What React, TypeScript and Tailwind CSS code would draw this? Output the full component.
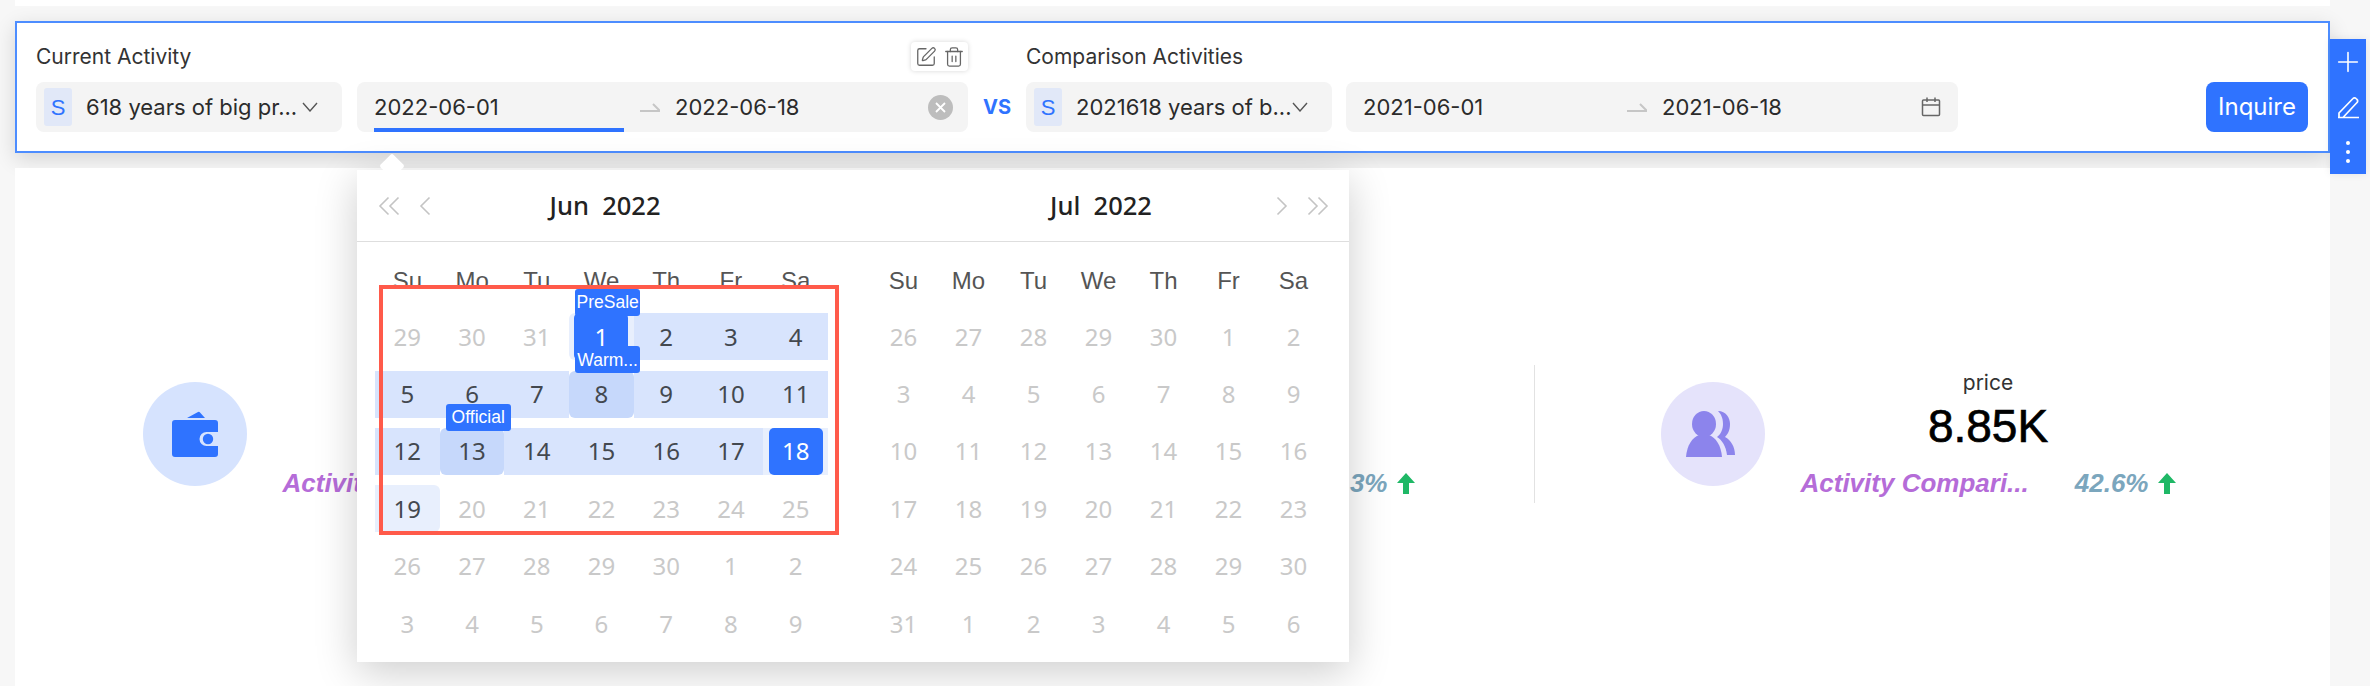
import { Plus, SquarePen, Trash2 } from "lucide-react";

const sans = "font-['Inter','Liberation_Sans',sans-serif]";
const helv = "font-['Liberation_Sans',Arial,sans-serif]";
const noto = "font-['Noto_Sans',sans-serif]";

const WEEK = ["Su", "Mo", "Tu", "We", "Th", "Fr", "Sa"];

type Day = { n: number; off?: boolean; badge?: string };

const JUN: Day[] = [
  ...[29, 30, 31].map((n) => ({ n, off: true })),
  ...Array.from({ length: 19 }, (_, i) => ({
    n: i + 1,
    badge: i === 0 ? "PreSale" : i === 7 ? "Warm..." : i === 12 ? "Official" : undefined,
  })),
  ...[20, 21, 22, 23, 24, 25, 26, 27, 28, 29, 30].map((n) => ({ n, off: true })),
  ...[1, 2, 3, 4, 5, 6, 7, 8, 9].map((n) => ({ n, off: true })),
];

const JUL: Day[] = [
  ...[26, 27, 28, 29, 30].map((n) => ({ n, off: true })),
  ...Array.from({ length: 31 }, (_, i) => ({ n: i + 1, off: true })),
  ...[1, 2, 3, 4, 5, 6].map((n) => ({ n, off: true })),
];

function Chevron({ dir, double }: { dir: "left" | "right"; double?: boolean }) {
  const flip = dir === "right";
  return (
    <svg width={double ? 22 : 12} height="20" viewBox={double ? "0 0 22 20" : "0 0 12 20"} fill="none" stroke="#c4c4c4" strokeWidth="1.6" className={flip ? "-scale-x-100" : ""}>
      <path d="M10.5 1.5 2 10l8.5 8.5" />
      {double && <path d="M20.5 1.5 12 10l8.5 8.5" />}
    </svg>
  );
}

function HalfArrow() {
  return (
    <svg width="20" height="12" viewBox="0 0 20 12" fill="none" stroke="#c6c6c6" strokeWidth="2">
      <path d="M0 10h20L13 3" />
    </svg>
  );
}

function ActivitySelect({ name }: { name: string }) {
  return (
    <div className="flex h-[50px] w-[306px] items-center rounded-lg bg-[#f4f4f4] pl-2 pr-6">
      <span className={`flex h-[38px] w-[28px] shrink-0 items-center justify-center rounded-[3px] bg-[#e1e8f8] text-[22px] text-[#2f73ff] ${helv}`}>S</span>
      <span className="ml-[14px] whitespace-nowrap text-[22px] text-[#2b2b2b]">{name}</span>
      <svg width="16" height="10" viewBox="0 0 16 10" fill="none" stroke="#555" strokeWidth="1.4" className="ml-auto shrink-0">
        <path d="M1 1l7 8 7-8" />
      </svg>
    </div>
  );
}

function DateText({ children, width }: { children: string; width: string }) {
  return <span className={`text-[22px] text-[#2b2b2b] ${width}`}>{children}</span>;
}

function CalendarIcon() {
  return (
    <svg width="20" height="20" viewBox="0 0 20 20" fill="none" stroke="#666" strokeWidth="1.5">
      <rect x="1.5" y="3" width="17" height="15.5" rx="1" />
      <path d="M1.5 8h17M6 .5v4.5M14 .5v4.5" />
    </svg>
  );
}

function DayCell({ day, monthActive }: { day: Day; monthActive: boolean }) {
  const inRange = monthActive && !day.off;
  const isStart = inRange && day.n === 1;
  const isEnd = inRange && day.n === 18;
  const isTail = inRange && day.n === 19;
  const isMark = inRange && (day.n === 8 || day.n === 13);
  const band = !inRange
    ? ""
    : isStart
      ? "bg-[#e8effd] rounded-l-md"
      : isEnd
        ? "bg-[#e8effd]"
        : isTail
          ? "bg-[#e8effd] rounded-r-md"
          : isMark
            ? "bg-[#c6d8fb] rounded-md"
            : "bg-[#d8e4fd]";

  return (
    <div className="relative flex h-[57.4px] items-center">
      <div className={`flex h-[47px] w-full items-center justify-center ${band}`}>
        <span
          className={`flex h-[47px] w-[54px] items-center justify-center rounded-[5px] text-[24px] ${
            isStart || isEnd ? "bg-[#2f73ff] text-white" : inRange ? "text-[#43484f]" : "text-[#c9c9c9]"
          } ${noto}`}
        >
          {day.n}
        </span>
      </div>
      {inRange && day.badge && (
        <span className={`absolute left-[6px] top-[-19px] z-10 flex h-[27px] w-[65px] items-center justify-center rounded-[3px] bg-[#2f73ff] text-[17.5px] text-white ${helv}`}>
          {day.badge}
        </span>
      )}
    </div>
  );
}

function MonthGrid({ days, active, gridWidth }: { days: Day[]; active?: boolean; gridWidth: string }) {
  return (
    <div className="w-[496px] pl-[18px] pt-6 pb-[10px]">
      <div className={`mb-3 grid grid-cols-7 text-center text-[24px] leading-[30px] text-[#555] ${gridWidth} ${helv}`}>
        {WEEK.map((w) => (
          <span key={w}>{w}</span>
        ))}
      </div>
      <div className={`grid grid-cols-7 ${gridWidth}`}>
        {days.map((d, i) => (
          <DayCell key={i} day={d} monthActive={!!active} />
        ))}
      </div>
    </div>
  );
}

function RangePopup() {
  return (
    <div className="absolute left-[357px] top-[170px] z-20 w-[992px] bg-white shadow-[0_10px_40px_rgba(0,0,0,0.2)]">
      <div className="absolute left-[26px] top-[-13px] h-[18px] w-[18px] rotate-45 rounded-[2px] bg-white" />
      <div className={`relative flex h-[72px] border-b border-[#dedede] text-[25.5px] font-medium text-[#222] ${noto}`}>
        <div className="grid w-[496px] grid-cols-[1fr_auto_1fr] items-center px-[21px]">
          <div className="flex items-center gap-[19px]">
            <Chevron dir="left" double />
            <Chevron dir="left" />
          </div>
          <span className="whitespace-pre">Jun  2022</span>
          <span />
        </div>
        <div className="grid w-[496px] grid-cols-[1fr_auto_1fr] items-center px-5">
          <span />
          <span className="whitespace-pre">Jul  2022</span>
          <div className="flex items-center justify-end gap-[19px]">
            <Chevron dir="right" />
            <Chevron dir="right" double />
          </div>
        </div>
      </div>
      <div className="flex">
        <MonthGrid days={JUN} active gridWidth="w-[453px]" />
        <MonthGrid days={JUL} gridWidth="w-[455px]" />
      </div>
      {/* annotation box from the screenshot */}
      <div className="absolute left-[22px] top-[115px] z-30 h-[250px] w-[460px] border-4 border-[#ff5a4a]" />
    </div>
  );
}

function Wallet() {
  return (
    <svg width="46" height="46" viewBox="0 0 46 46" fill="#2f73ff">
      <path d="M15 7 26 1a1.5 1.5 0 0 1 2 .5L33 7Z" />
      <path d="M3 9H43a3 3 0 0 1 3 3v9H34.5a7 7 0 0 0 0 14H46v8a3 3 0 0 1-3 3H3a3 3 0 0 1-3-3V12a3 3 0 0 1 3-3Z" />
      <circle cx="36" cy="28" r="5.2" />
    </svg>
  );
}

function People() {
  return (
    <svg width="50" height="46" viewBox="0 0 50 46" fill="#8c84ec" className="ml-[-4px]">
      <path d="M32 0C40 0 44 7 44 13C44 19 42 23 39 26C45 29 49 36 49 44H41C40 35 36 29 31 26C35 23 37 18 37 13C37 7 35 3 32 0Z" />
      <ellipse cx="18" cy="13" rx="12" ry="13" />
      <path d="M0 46C1 34 6 27 13 24H23C30 27 35 34 36 46Z" />
    </svg>
  );
}

function UpArrow() {
  return (
    <svg width="18" height="21" viewBox="0 0 18 21" fill="#1fb866">
      <path d="M9 0 18 10H12V21H6V10H0Z" />
    </svg>
  );
}

function Stat({
  icon,
  tint,
  label,
  value,
  percent,
  divider,
}: {
  icon: React.ReactNode;
  tint: string;
  label: string;
  value: string;
  percent: string;
  divider?: boolean;
}) {
  return (
    <div className={`flex h-[138px] items-center justify-center gap-9 ${divider ? "border-r border-[#e2e2e2]" : ""}`}>
      <div className={`flex h-[104px] w-[104px] items-center justify-center rounded-full ${tint}`}>{icon}</div>
      <div className="w-[375px] text-center">
        <div className="text-[21px] leading-6 text-[#333]">{label}</div>
        <div className={`mt-[6px] text-[46px] leading-[50px] text-black [-webkit-text-stroke:0.7px_black] ${helv}`}>{value}</div>
        <div className={`mt-[18px] flex items-center justify-between text-[26px] font-bold italic leading-7 ${helv}`}>
          <span className="whitespace-nowrap text-[#b56cd8]">Activity Compari...</span>
          <span className="flex items-center gap-[9px] text-[#7ba6bd]">
            {percent}
            <UpArrow />
          </span>
        </div>
      </div>
    </div>
  );
}

function SideToolbar() {
  return (
    <div className="absolute left-[2330px] top-[39px] z-10 flex h-[135px] w-9 flex-col items-center bg-[#2f73ff] pt-[7px] text-white shadow-[0_0_8px_rgba(0,0,0,0.08)]">
      <Plus size={32} strokeWidth={1.2} />
      <svg width="24" height="24" viewBox="0 0 24 24" fill="none" stroke="white" strokeWidth="1.7" className="mt-[17px]">
        <path d="M2 22.5h21M3 22.5v-4.5L17 3.5a2 2 0 0 1 3 0l1 1a2 2 0 0 1 0 3L7 22.5" />
      </svg>
      <div className="mt-[22px] flex flex-col gap-[5px]">
        <span className="h-1 w-1 rounded-full bg-white" />
        <span className="h-1 w-1 rounded-full bg-white" />
        <span className="h-1 w-1 rounded-full bg-white" />
      </div>
    </div>
  );
}

export default function App() {
  return (
    <div className={`relative h-[686px] w-[2370px] overflow-hidden bg-[#f7f7f7] ${sans}`}>
      <div className="ml-[15px] w-[2315px]">
        <div className="h-[6px] bg-white" />

        <div className="mt-[15px] flex h-[132px] border-2 border-[#4d8dff] bg-white pl-[19px] pr-5 pt-[19px] shadow-[0_6px_20px_rgba(0,0,0,0.14)]">
          <div className="w-[932px]">
            <div className="mb-[11px] flex h-[29px] items-center justify-between">
              <span className="text-[21px] text-[#333]">Current Activity</span>
              <div className="flex h-[29px] w-[57px] items-center justify-center gap-[6px] rounded bg-white text-[#666] shadow-[0_0_5px_rgba(0,0,0,0.16)]">
                <SquarePen size={22} strokeWidth={1.4} />
                <Trash2 size={22} strokeWidth={1.4} />
              </div>
            </div>
            <div className="flex gap-[15px]">
              <ActivitySelect name="618 years of big pr..." />
              <div className="relative flex h-[50px] w-[611px] items-center rounded-lg bg-[#f4f4f4] pl-[17px]">
                <DateText width="w-[266px]">2022-06-01</DateText>
                <HalfArrow />
                <span className="ml-[15px]">
                  <DateText width="">2022-06-18</DateText>
                </span>
                <span className="ml-auto mr-[15px] flex h-[25px] w-[25px] items-center justify-center rounded-full bg-[#bdbdbd]">
                  <svg width="11" height="11" viewBox="0 0 11 11" stroke="white" strokeWidth="1.8">
                    <path d="M1 1l9 9M10 1l-9 9" />
                  </svg>
                </span>
                <span className="absolute bottom-0 left-[17px] h-1 w-[250px] bg-[#2f73ff]" />
              </div>
            </div>
          </div>

          <div className="mb-[19px] flex h-[50px] w-[58px] items-center justify-center self-end text-[20px] font-bold text-[#2f73ff]">VS</div>

          <div className="w-[932px]">
            <div className="mb-[11px] flex h-[29px] items-center text-[21px] text-[#333]">Comparison Activities</div>
            <div className="flex gap-[14px]">
              <ActivitySelect name="2021618 years of b..." />
              <div className="flex h-[50px] w-[612px] items-center rounded-lg bg-[#f4f4f4] pl-[17px] pr-[17px]">
                <DateText width="w-[264px]">2021-06-01</DateText>
                <HalfArrow />
                <span className="ml-[15px]">
                  <DateText width="">2021-06-18</DateText>
                </span>
                <span className="ml-auto">
                  <CalendarIcon />
                </span>
              </div>
            </div>
          </div>

          <button type="button" className="ml-auto mt-10 h-[50px] w-[102px] rounded-lg bg-[#2f73ff] text-[24px] text-white">
            Inquire
          </button>
        </div>

        <div className="relative mt-[15px] h-[518px] bg-white pl-[6px] pt-[197px]">
          <div className="grid w-[2280px] grid-cols-[759px_755px_766px]">
            <Stat icon={<Wallet />} tint="bg-[#d6e3fe]" label="sales" value="2.14M" percent="18.2%" divider />
            <Stat icon={<Wallet />} tint="bg-[#d6e3fe]" label="orders" value="5.32K" percent="12.3%" divider />
            <Stat icon={<People />} tint="bg-[#e5e3fb]" label="price" value="8.85K" percent="42.6%" />
          </div>
        </div>
      </div>

      <RangePopup />
      <SideToolbar />
    </div>
  );
}
